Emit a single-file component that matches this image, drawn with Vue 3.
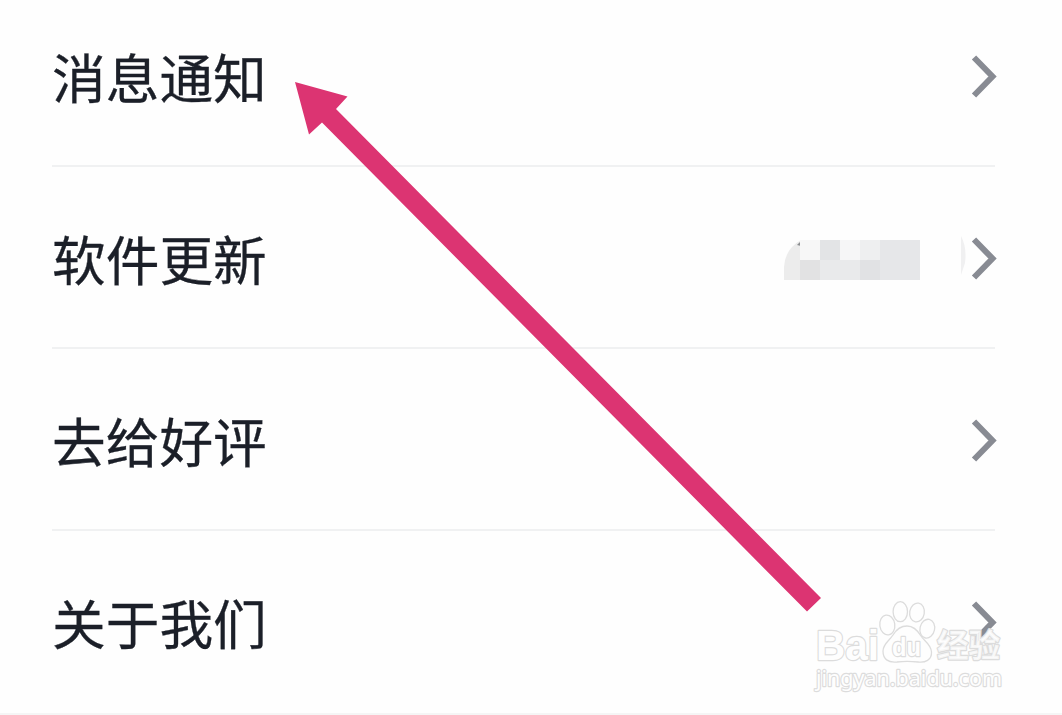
<template>
  <div class="page">
    <div class="settings">
      <div v-for="item in items" :key="item.title" class="row">
        <span class="title">{{ item.title }}</span>
        <div class="side">
          <svg v-if="item.masked" class="mosaic" width="184" height="60" viewBox="0 0 184 60">
            <path d="M30 11H17Q1 20 0 38V51H30Z" fill="#ececec" />
            <path d="M13 16L16 13H20L17 17Z" fill="#8b8d90" />
            <rect v-for="(b, i) in blocks" :key="i" :x="b[0]" :y="b[1]" :width="b[2]" height="20" :fill="b[3]" />
            <path d="M177 7Q183 18 181 34L177 46Z" fill="#f0f0f1" />
          </svg>
          <svg class="chevron" width="28" height="44" viewBox="0 0 28 44">
            <path d="M4 2.500L22.500 21.500L4 40.500" />
          </svg>
        </div>
      </div>
    </div>

    <!-- стрелка-указатель поверх списка -->
    <svg class="arrow" width="1062" height="715" viewBox="0 0 1062 715">
      <path d="M295 82L347.500 96.500L336 109L821 598L807 611.500L322 122.500L309 134.500Z" />
    </svg>

    <svg class="watermark" width="210" height="105" viewBox="0 0 210 105">
      <g class="logo">
        <text x="6" y="65" class="brand" textLength="63" lengthAdjust="spacingAndGlyphs">Bai</text>
        <ellipse cx="77.300" cy="30" rx="7.500" ry="10" transform="rotate(-8 77.300 30)" />
        <ellipse cx="90.300" cy="16.700" rx="7.200" ry="10" />
        <ellipse cx="107" cy="17.500" rx="7.300" ry="9.500" transform="rotate(10 107 17.500)" />
        <ellipse cx="117.300" cy="33.700" rx="7.300" ry="9.500" transform="rotate(12 117.300 33.700)" />
        <path d="M97 31C104 31 108 36 111 41C114 46 121 49 121.500 57C122 65 115 68 108 67C100 66 94 66 87 67C78 68 73 64 73 56C73 49 79 46 83 40C86 35 90 31 97 31Z" />
        <text x="82" y="61" class="du" textLength="29" lengthAdjust="spacingAndGlyphs">du</text>
        <text x="127" y="62" class="cn" textLength="63" lengthAdjust="spacingAndGlyphs">经验</text>
      </g>
      <text x="6" y="90.500" class="url" textLength="186" lengthAdjust="spacingAndGlyphs">jingyan.baidu.com</text>
    </svg>
  </div>
</template>

<script setup>
const items = [
  { title: '消息通知' },
  { title: '软件更新', masked: true },
  { title: '去给好评' },
  { title: '关于我们' }
];

// x, y, ширина, цвет
const blocks = [
  [16, 11, 20, '#f7f7f7'],
  [36, 11, 20, '#e3e4e6'],
  [56, 11, 20, '#f6f6f7'],
  [76, 11, 20, '#eeeff0'],
  [96, 11, 40, '#e6e7e9'],
  [16, 31, 20, '#e2e2e3'],
  [36, 31, 40, '#e9eaeb'],
  [76, 31, 20, '#e1e2e4'],
  [96, 31, 40, '#e6e7e9']
];
</script>

<style>
body {
  margin: 0;
  background: #fefefe;
}
</style>

<style scoped>
.page {
  position: relative;
  display: flex;
  flex-direction: column;
  width: 1062px;
  height: 715px;
  overflow: hidden;
  background: #fefefe;
  font-family: "Noto Sans CJK SC", sans-serif;
}

.settings {
  margin-top: -15px;
  border-bottom: 2px solid #f5f5f5;
}

.row {
  display: flex;
  align-items: center;
  justify-content: space-between;
  box-sizing: border-box;
  height: 182px;
  margin: 0 67px 0 52px;
  border-bottom: 2px solid #f0f1f2;
}

.row:last-child {
  border-bottom-color: transparent;
}

.title {
  padding-top: 2px;
  font-size: 53.7px;
  line-height: 80px;
  color: #1b1f28;
  -webkit-text-stroke: 0.3px #1b1f28;
}

.side {
  display: flex;
  align-items: center;
  padding-top: 3px;
}

.mosaic {
  margin-right: 2px;
}

.chevron {
  margin-right: -3px;
}

.chevron path {
  fill: none;
  stroke: #888b93;
  stroke-width: 6;
}

.arrow {
  position: absolute;
  top: 0;
  left: 0;
}

.arrow path {
  fill: #dc3472;
}

.watermark {
  position: absolute;
  top: 595px;
  left: 810px;
}

.logo {
  fill: #fefefe;
  stroke: #dcdcdc;
  stroke-width: 1.3;
}

.brand,
.du,
.cn,
.url {
  fill: #fefefe;
  stroke: #dcdcdc;
  stroke-width: 2.4;
  stroke-linejoin: round;
  paint-order: stroke;
}

.brand {
  font: bold 43px "Liberation Sans", sans-serif;
}

.du {
  font: bold 26px "Liberation Sans", sans-serif;
}

.cn {
  font: bold 32px "Noto Sans CJK SC", sans-serif;
  fill-opacity: 0.8;
}

.url {
  font: 22px "Noto Sans", sans-serif;
}
</style>
